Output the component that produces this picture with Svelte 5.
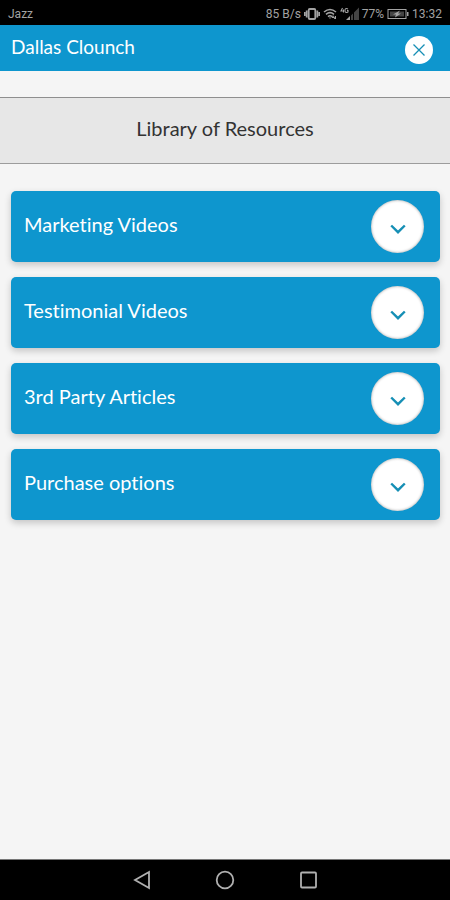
<script>
    const sections = ["Marketing Videos", "Testimonial Videos", "3rd Party Articles", "Purchase options"];
</script>

<div class="screen">
    <div class="status">
        <span>Jazz</span>
        <div class="indicators">
            <span>85 B/s</span>
            <svg class="vibrate" width="16" height="12" viewBox="0 0 16 12" aria-hidden="true">
                <rect x="4.7" y="1" width="6.6" height="10" rx="1" />
                <path d="M2.7 2.5v7M.7 4v4M13.3 2.5v7M15.3 4v4" />
            </svg>
            <svg class="wifi" width="14" height="12" viewBox="0 0 14 12" aria-hidden="true">
                <path d="M1 4q6-5 12 0M3 6.3q4-3.3 8 0M5 8.6q2-1.6 4 0" />
                <path class="fill" d="M6 9.5h2l-1 1.5zM10 7l1.5 3h-3zM12 8h1v3h-2z" />
            </svg>
            <svg class="signal" width="19" height="14" viewBox="0 0 19 14" aria-hidden="true">
                <path class="mark" d="M2.5 1L1 4h3M3.5 2.5v3M8 2Q5 .5 5 3.500T8 5V3.500H7" />
                <path class="fill" d="M6 13l4-4v4z" />
                <path class="faint" d="M11 8.5l2-2V13h-2zM14 5.5l5-5V13h-5z" />
            </svg>
            <span>77%</span>
            <svg class="battery" width="22" height="12" viewBox="0 0 22 12" aria-hidden="true">
                <rect x="1" y="1.5" width="18" height="9" />
                <path class="faint" d="M3 3.5h14v5H3z" />
                <path class="fill" d="M13 2.500L6 6.500h3L8 9.500l6-4h-3zM20 4h1.500v4H20z" />
            </svg>
            <span>13:32</span>
        </div>
    </div>

    <header>
        <span class="name">Dallas Clounch</span>
        <button class="close" aria-label="Close">
            <svg width="14" height="14" viewBox="0 0 14 14" aria-hidden="true">
                <path d="M1.5 1.5l11 11M12.5 1.5l-11 11" />
            </svg>
        </button>
    </header>

    <main>
        <h1>Library of Resources</h1>
        <div class="list">
            {#each sections as section}
                <button class="card">
                    <span>{section}</span>
                    <span class="circle">
                        <svg width="16" height="10" viewBox="0 0 16 10" aria-hidden="true">
                            <path d="M1.2 1.5L8 8.200l6.800-6.700" />
                        </svg>
                    </span>
                </button>
            {/each}
        </div>
    </main>

    <nav>
        <button aria-label="Back">
            <svg width="20" height="20" viewBox="0 0 20 20" aria-hidden="true">
                <path d="M17 2v16L3 10z" />
            </svg>
        </button>
        <button aria-label="Home">
            <svg width="20" height="20" viewBox="0 0 20 20" aria-hidden="true">
                <circle cx="10" cy="10" r="8.3" />
            </svg>
        </button>
        <button aria-label="Recent apps">
            <svg width="20" height="20" viewBox="0 0 20 20" aria-hidden="true">
                <rect x="3" y="2.500" width="15" height="15" rx="1" />
            </svg>
        </button>
    </nav>
</div>

<style>
    :global(body) {
        margin: 0;
        background: #f5f5f5;
    }

    .screen {
        --blue: #0e96ce;
        display: flex;
        flex-direction: column;
        min-height: 100vh;
        color: #fff;
        font-family: Lato, "Noto Sans", sans-serif;
        font-variant-ligatures: none;
    }

    button {
        padding: 0;
        border: none;
        color: inherit;
        font: inherit;
        cursor: pointer;
    }

    svg {
        display: block;
        fill: none;
        stroke: currentColor;
    }

    .status {
        display: flex;
        align-items: center;
        justify-content: space-between;
        box-sizing: border-box;
        height: 25px;
        padding: 2px 8px 0;
        background: #000;
        color: #a3a3a3;
        font-family: Roboto, sans-serif;
        font-size: 12px;
    }

    .indicators {
        display: flex;
        align-items: center;
        gap: 3px;
    }

    .vibrate {
        stroke-width: 1.8;
    }

    .wifi {
        stroke-width: 1.6;
    }

    .mark {
        stroke-width: 1.1;
    }

    .fill {
        fill: currentColor;
        stroke: none;
    }

    .faint {
        fill: #444;
        stroke: none;
    }

    header {
        display: flex;
        align-items: center;
        justify-content: space-between;
        height: 46px;
        padding: 0 17px 0 11px;
        background: var(--blue);
    }

    .name {
        padding-bottom: 4px;
        font-size: 19px;
    }

    .close,
    .circle {
        display: flex;
        align-items: center;
        justify-content: center;
        border-radius: 50%;
        background: #fff;
        color: #168fb5;
    }

    .close {
        width: 28px;
        height: 28px;
        margin-top: 3px;
    }

    .close svg {
        stroke-width: 1.3;
    }

    main {
        flex: 1;
        padding-top: 26px;
    }

    h1 {
        margin: 0;
        padding: 15px 0 19px;
        border-top: 1px solid #8f8f8f;
        border-bottom: 1px solid #9c9c9c;
        background: #e7e7e7;
        color: #333;
        font-size: 20px;
        font-weight: 400;
        line-height: 31px;
        text-align: center;
    }

    .list {
        display: flex;
        flex-direction: column;
        gap: 15px;
        padding: 27px 10px 27px 11px;
    }

    .card {
        display: flex;
        align-items: center;
        justify-content: space-between;
        box-sizing: border-box;
        height: 71px;
        padding: 0 16px 0 13px;
        border-radius: 5px;
        background: var(--blue);
        box-shadow: 0 3px 7px rgba(0, 0, 0, 0.2);
        font-size: 20px;
    }

    .card > span:first-child {
        padding-bottom: 5px;
    }

    .circle {
        box-sizing: border-box;
        width: 53px;
        height: 53px;
        padding-top: 4px;
        box-shadow: inset 0 0 3px rgba(0, 0, 0, 0.4);
    }

    .circle svg {
        stroke-width: 2.4;
    }

    nav {
        display: flex;
        justify-content: center;
        align-items: center;
        gap: 63px;
        height: 40px;
        border-top: 1px solid #777;
        background: #000;
        color: #b0b0b0;
    }

    nav button {
        background: none;
    }

    nav svg {
        stroke-width: 1.8;
    }
</style>
